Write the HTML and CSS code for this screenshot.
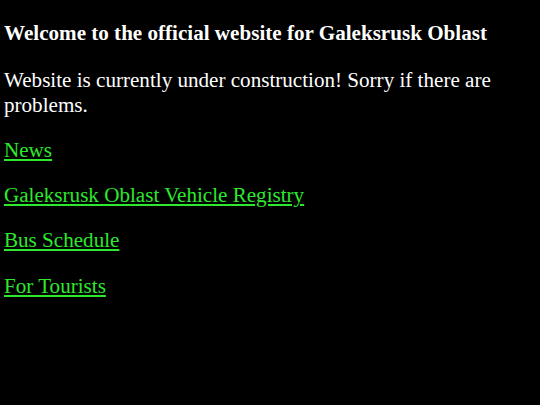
FILE: index.html
```html
<!DOCTYPE html>
<html>
<head>
<meta charset="utf-8">
<title>Galeksrusk Oblast</title>
<link rel="stylesheet" href="styles.css">
</head>
<body>
<h1 class="title">Welcome to the official website for Galeksrusk Oblast</h1>
<p class="text">Website is currently under construction! Sorry if there are problems.</p>
<p class="text"><a class="link" href="#">News</a></p>
<p class="text"><a class="link" href="#">Galeksrusk Oblast Vehicle Registry</a></p>
<p class="text"><a class="link" href="#">Bus Schedule</a></p>
<p class="text"><a class="link" href="#">For Tourists</a></p>
</body>
</html>
```

FILE: styles.css
```css
html, body {
  background: #000;
}
body {
  margin: 0;
  padding: 0 4px;
  color: #fff;
  font-family: "Liberation Serif", "Times New Roman", serif;
  font-size: 21.1px;
  line-height: 24.3px;
}
.title {
  font-size: 21.1px;
  font-weight: bold;
  margin: 21px 0 23px;
}
.text {
  margin: 21px 0;
}
.link {
  color: #2ee82e;
  text-decoration: underline;
}
```
